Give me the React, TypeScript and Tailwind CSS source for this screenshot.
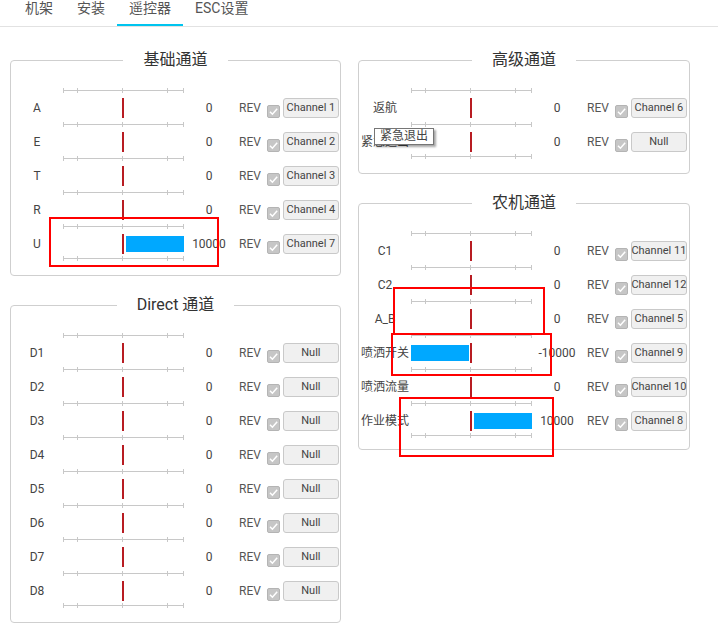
import React from "react";

type Row = { label: string; value: number; ch: string; tip?: string };

const basic: Row[] = [
  { label: "A", value: 0, ch: "Channel 1" },
  { label: "E", value: 0, ch: "Channel 2" },
  { label: "T", value: 0, ch: "Channel 3" },
  { label: "R", value: 0, ch: "Channel 4" },
  { label: "U", value: 10000, ch: "Channel 7" },
];

const direct: Row[] = [1, 2, 3, 4, 5, 6, 7, 8].map((i) => ({
  label: `D${i}`,
  value: 0,
  ch: "Null",
}));

const advanced: Row[] = [
  { label: "返航", value: 0, ch: "Channel 6" },
  { label: "紧急退出", value: 0, ch: "Null", tip: "紧急退出" },
];

const agri: Row[] = [
  { label: "C1", value: 0, ch: "Channel 11" },
  { label: "C2", value: 0, ch: "Channel 12" },
  { label: "A_B", value: 0, ch: "Channel 5" },
  { label: "喷洒开关", value: -10000, ch: "Channel 9" },
  { label: "喷洒流量", value: 0, ch: "Channel 10" },
  { label: "作业模式", value: 10000, ch: "Channel 8" },
];

function Scale({ last }: { last?: boolean }) {
  return (
    <div className={`flex h-[5px] pl-[52px] ${last ? "-mt-[2px]" : ""}`}>
      <svg width="121" height="5" className="block">
        <rect x="0" y="2" width="121" height="1" fill="#c8c8c8" />
        {[0, 14, 59, 104, 120].map((x) => (
          <rect key={x} x={x} y="0" width="1" height="5" fill="#c8c8c8" />
        ))}
      </svg>
    </div>
  );
}

function Check() {
  return (
    <div className="ml-[6px] mt-[12px] flex h-[13px] w-[13px] items-center justify-center self-start rounded-[2px] border border-[#b4b4b4] bg-[#c6c6c6]">
      <svg width="11" height="11" viewBox="0 0 11 11" className="block">
        <path d="M2 5.8 L4.4 8.2 L9.2 2.8" fill="none" stroke="#ffffff" strokeWidth="1.5" />
      </svg>
    </div>
  );
}

function ChannelRow({ r }: { r: Row }) {
  return (
    <div className="relative flex h-[29px] items-center text-[12px] text-[#444]">
      <div className="w-[52px] whitespace-nowrap text-center">{r.label}</div>
      <div className="flex w-[121px] items-center">
        <div className="flex w-[59px]">
          {r.value < 0 && <div className="h-4 w-[58px] bg-[#00a8ff]" />}
        </div>
        <div className="h-5 w-[2px] bg-[#b81c22]" />
        <div className="flex w-[60px] pl-[2px]">
          {r.value > 0 && <div className="h-4 w-[58px] bg-[#00a8ff]" />}
        </div>
      </div>
      <div className="w-[50px] text-center">{r.value}</div>
      <div className="ml-[5px] text-[#555]">REV</div>
      <Check />
      <button className="ml-[3px] mt-[1px] flex h-[20px] w-[56px] items-center justify-center whitespace-nowrap rounded-[3px] border border-[#c9c9c9] bg-[#f0f0f0] p-0 text-[11px] text-[#444]">
        {r.ch}
      </button>
      {r.tip && (
        <div className="absolute left-[15px] top-[1px] z-10 whitespace-nowrap border border-[#767676] bg-white px-[5px] text-[12px] leading-[15px] text-[#444] shadow-[2px_2px_2px_rgba(0,0,0,0.35)]">
          {r.tip}
        </div>
      )}
    </div>
  );
}

function Panel({ title, rows, pb, mt }: { title: string; rows: Row[]; pb: string; mt: string }) {
  return (
    <fieldset className={`rounded-[4px] border border-[#cfcfcf] pt-[17px] ${pb} ${mt}`}>
      <legend className="mx-auto px-5 text-[16px] leading-[22px] text-[#333]">{title}</legend>
      <Scale />
      {rows.map((r, i) => (
        <React.Fragment key={r.label}>
          <ChannelRow r={r} />
          <Scale last={i === rows.length - 1} />
        </React.Fragment>
      ))}
    </fieldset>
  );
}

export default function App() {
  const tabs = ["机架", "安装", "遥控器", "ESC设置"];
  return (
    <div className="relative h-[632px] w-[718px] overflow-hidden bg-white font-[family-name:Roboto,'Noto_Sans_CJK_SC',sans-serif]">
      <div className="flex h-[27px] border-b border-[#e2e2e2] pl-[13px]">
        {tabs.map((t) => (
          <div
            key={t}
            className={`h-[26px] px-[12px] text-[14px] leading-[16px] text-[#555] ${
              t === "遥控器" ? "border-b-2 border-[#00c4ef]" : ""
            }`}
          >
            {t}
          </div>
        ))}
      </div>
      <div className="flex pl-[10px]">
        <div className="flex w-[331px] flex-col">
          <Panel title="基础通道" rows={basic} pb="pb-[14px]" mt="mt-[22px]" />
          <Panel title="Direct 通道" rows={direct} pb="pb-[14px]" mt="mt-[18px]" />
        </div>
        <div className="ml-[17px] flex w-[332px] flex-col">
          <Panel title="高级通道" rows={advanced} pb="pb-[14px]" mt="mt-[22px]" />
          <Panel title="农机通道" rows={agri} pb="pb-[11px]" mt="mt-[18px]" />
        </div>
      </div>
      <div className="pointer-events-none absolute left-[49px] top-[217px] h-[50px] w-[170px] border-2 border-[#ff0000]" />
      <div className="pointer-events-none absolute left-[393px] top-[287px] h-[48px] w-[152px] border-2 border-[#ff0000]" />
      <div className="pointer-events-none absolute left-[391px] top-[333px] h-[43px] w-[161px] border-2 border-[#ff0000]" />
      <div className="pointer-events-none absolute left-[399px] top-[397px] h-[60px] w-[155px] border-2 border-[#ff0000]" />
    </div>
  );
}
